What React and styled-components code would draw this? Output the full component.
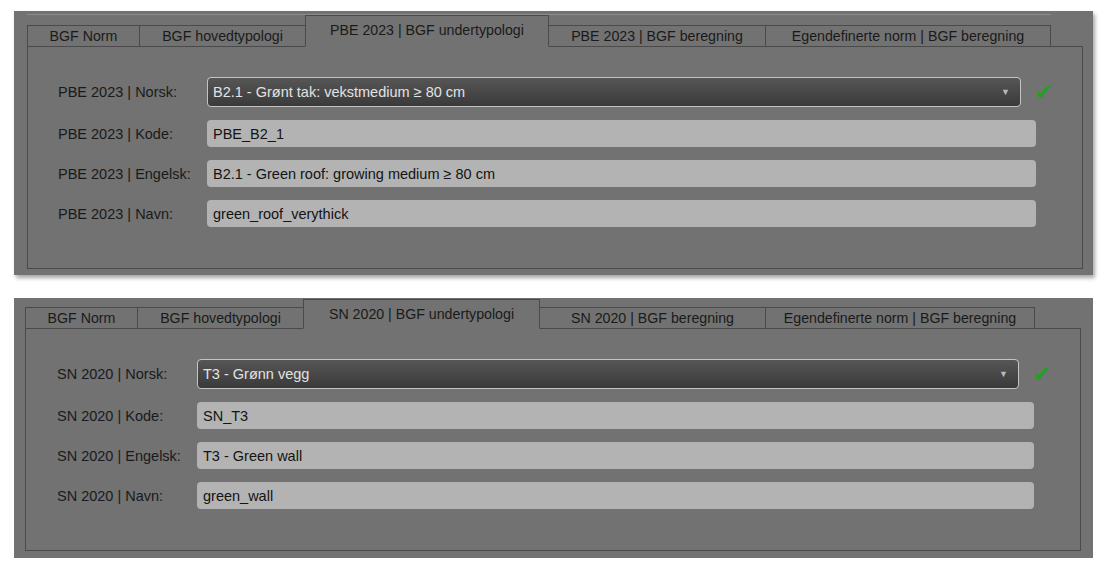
import styled, { createGlobalStyle } from 'styled-components';

const GlobalStyle = createGlobalStyle`
  body {
    margin: 0;
    background: #ffffff;
    font-family: 'Liberation Sans', Arial, sans-serif;
  }
`;

const Page = styled.div`
  display: flex;
  flex-direction: column;
  padding: 11px 16px 0 14px;
  gap: 23px;
`;

const Panel = styled.div`
  width: 1079px;
  background: #727272;
  padding: ${(p) => (p.$second ? '0 12px 7px 11px' : '3px 10px 6px 13px')};
  box-sizing: border-box;
  box-shadow: ${(p) => (p.$second ? 'none' : '2px 3px 4px rgba(0, 0, 0, 0.35)')};
`;

const TabBar = styled.div`
  display: flex;
  align-items: flex-end;
  width: fit-content;
  border-top: 1px solid ${(p) => (p.$line ? '#8d8d8d' : 'transparent')};
  margin-bottom: -1px;
`;

const Tab = styled.div`
  position: relative;
  width: ${(p) => p.$width + 1}px;
  height: ${(p) => (p.$active ? p.$activeHeight : 22)}px;
  padding-top: ${(p) => (p.$active ? '6px' : '0')};
  box-sizing: border-box;
  border: 1px solid #4a4a4a;
  border-bottom-color: ${(p) => (p.$active ? '#727272' : '#4a4a4a')};
  margin-left: -1px;
  background: #727272;
  color: #1a1a1a;
  font-size: 14.2px;
  display: flex;
  justify-content: center;
  align-items: ${(p) => (p.$active ? 'flex-start' : 'center')};
  white-space: nowrap;
  z-index: ${(p) => (p.$active ? 2 : 1)};

  &:first-child {
    margin-left: 0;
  }
`;

const Pane = styled.div`
  border: 1px solid #4a4a4a;
  padding: 30px 46px 41px ${(p) => p.$left}px;
  display: flex;
  flex-direction: column;
  gap: 13px;
`;

const Row = styled.div`
  display: flex;
  align-items: center;
`;

const Label = styled.div`
  width: ${(p) => p.$width}px;
  flex: none;
  font-size: 14.5px;
  color: #1a1a1a;
`;

const Select = styled.div`
  flex: 1;
  height: 30px;
  box-sizing: border-box;
  border: 1px solid #c4c4c4;
  border-radius: 4px;
  background: linear-gradient(#565656, #3a3a3a);
  color: #e2e2e2;
  font-size: 14.5px;
  display: flex;
  align-items: center;
  justify-content: space-between;
  padding: 0 10px 0 5px;
`;

const Arrow = styled.span`
  color: #b8b8b8;
  font-size: 9px;
`;

const Check = styled.span`
  width: 16px;
  flex: none;
  margin: 0 -14px 0 13px;
  color: #23a024;
  font-size: 23px;
  line-height: 1;
  font-family: 'DejaVu Sans', sans-serif;
`;

const Input = styled.div`
  flex: 1;
  height: 27px;
  border-radius: 4px;
  background: #b3b3b3;
  color: #141414;
  font-size: 14.5px;
  display: flex;
  align-items: center;
  padding: 0 6px;
`;

const TabPanel = ({ second, tabs, active, activeHeight, labelWidth, left, prefix, values }) => (
  <Panel $second={second}>
    <TabBar $line={!second}>
      {tabs.map(([t, w], i) => (
        <Tab key={t} $width={w} $active={i === active} $activeHeight={activeHeight}>
          {t}
        </Tab>
      ))}
    </TabBar>
    <Pane $left={left}>
      <Row>
        <Label $width={labelWidth}>{prefix} | Norsk:</Label>
        <Select>
          <span>{values[0]}</span>
          <Arrow>▼</Arrow>
        </Select>
        <Check>✔</Check>
      </Row>
      <Row>
        <Label $width={labelWidth}>{prefix} | Kode:</Label>
        <Input>{values[1]}</Input>
      </Row>
      <Row>
        <Label $width={labelWidth}>{prefix} | Engelsk:</Label>
        <Input>{values[2]}</Input>
      </Row>
      <Row>
        <Label $width={labelWidth}>{prefix} | Navn:</Label>
        <Input>{values[3]}</Input>
      </Row>
    </Pane>
  </Panel>
);

export default function App() {
  return (
    <Page>
      <GlobalStyle />
      <TabPanel
        tabs={[
          ['BGF Norm', 112],
          ['BGF hovedtypologi', 166],
          ['PBE 2023 | BGF undertypologi', 243],
          ['PBE 2023 | BGF beregning', 217],
          ['Egendefinerte norm | BGF beregning', 285],
        ]}
        active={2}
        activeHeight={32}
        labelWidth={149}
        left={30}
        prefix="PBE 2023"
        values={[
          'B2.1 - Grønt tak: vekstmedium ≥ 80 cm',
          'PBE_B2_1',
          'B2.1 - Green roof: growing medium ≥ 80 cm',
          'green_roof_verythick',
        ]}
      />
      <TabPanel
        second
        tabs={[
          ['BGF Norm', 112],
          ['BGF hovedtypologi', 166],
          ['SN 2020 | BGF undertypologi', 236],
          ['SN 2020 | BGF beregning', 226],
          ['Egendefinerte norm | BGF beregning', 269],
        ]}
        active={2}
        activeHeight={30}
        labelWidth={140}
        left={31}
        prefix="SN 2020"
        values={['T3 - Grønn vegg', 'SN_T3', 'T3 - Green wall', 'green_wall']}
      />
    </Page>
  );
}
